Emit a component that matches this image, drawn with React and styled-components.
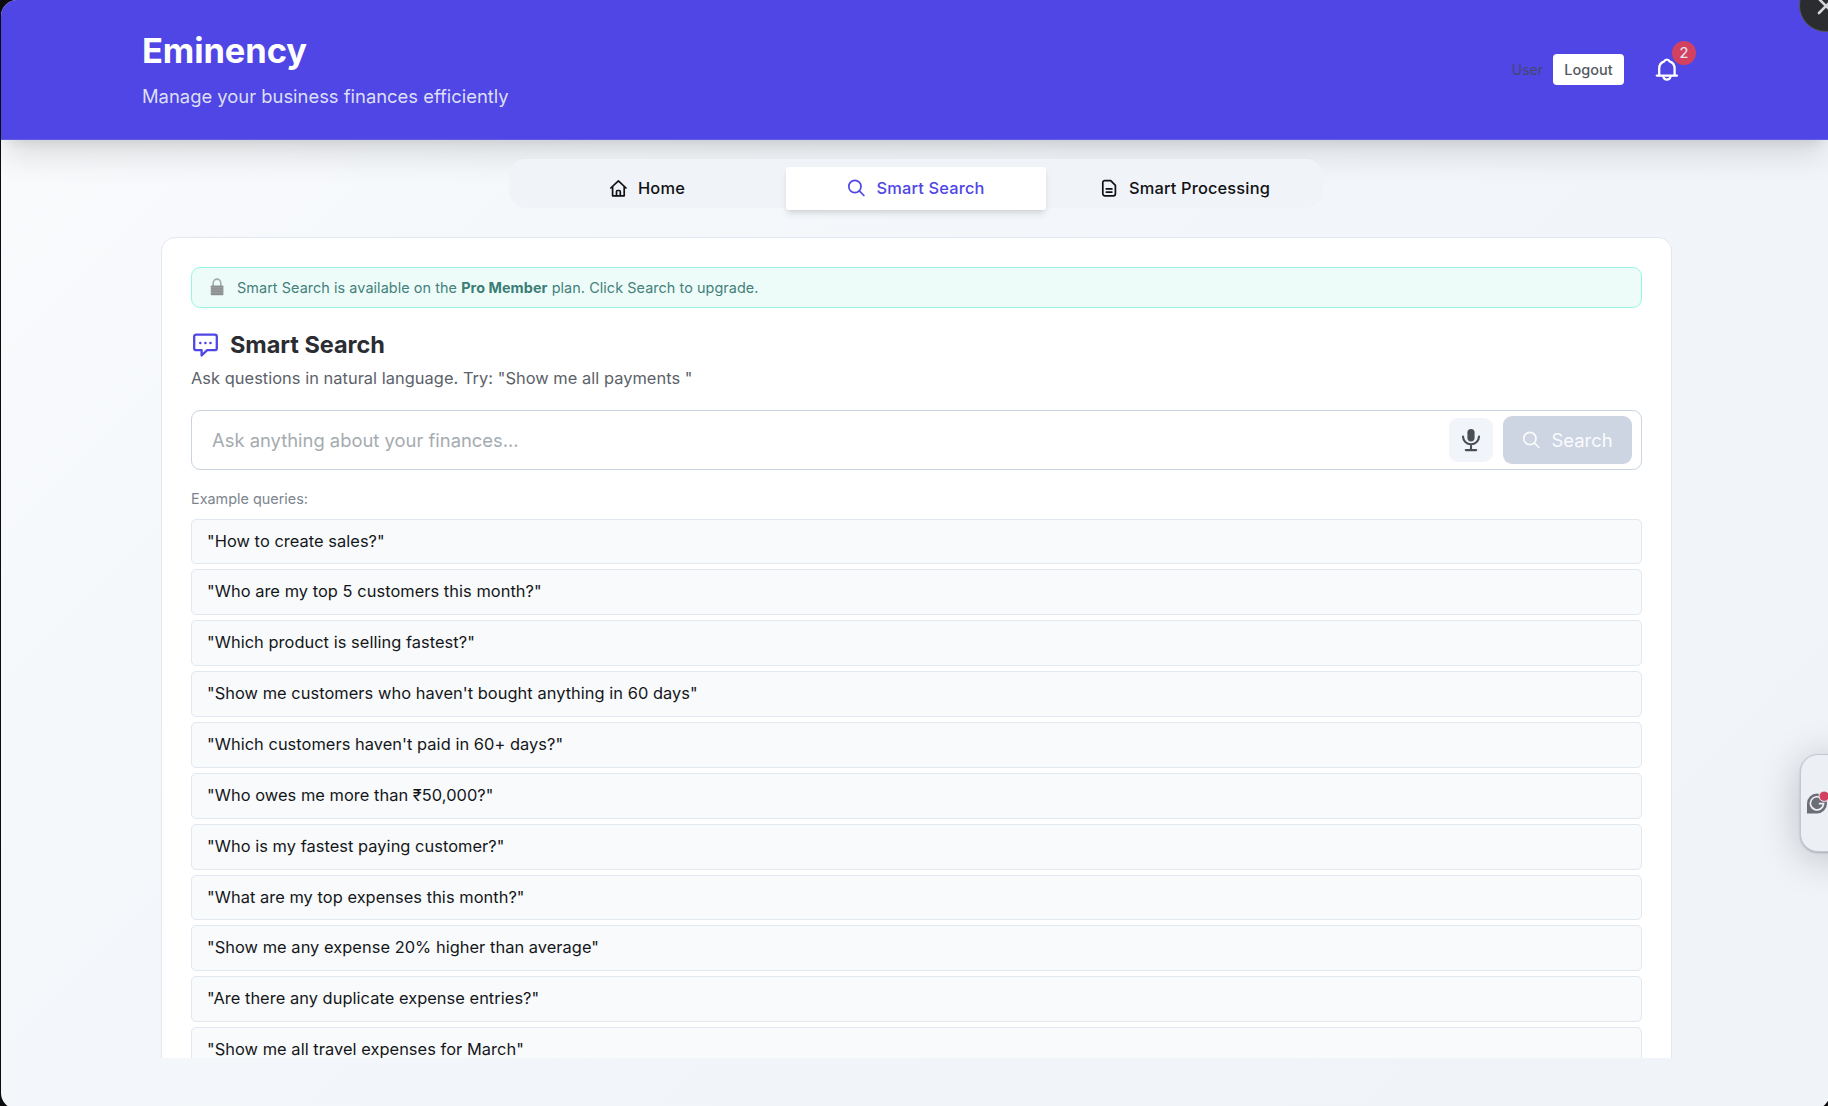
import React, { useState } from "react";
import styled, { createGlobalStyle, css } from "styled-components";

const GlobalStyle = createGlobalStyle`
  * {
    box-sizing: border-box;
  }

  body {
    margin: 0;
    background: #0c0c0e;
    font-family: Inter, "Liberation Sans", sans-serif;
  }

  button, input {
    font-family: inherit;
  }
`;

const Screen = styled.div`
  position: relative;
  width: 1828px;
  height: 1106px;
  padding-left: 1px;
  overflow: hidden;
`;

const Page = styled.div`
  display: flex;
  flex-direction: column;
  width: 1829px;
  height: 1109px;
  border-radius: 16px;
  overflow: hidden;
  background: linear-gradient(135deg, #fafafc 0%, #f4f8fb 30%, #f0f3f8 85%);
`;

const Header = styled.header`
  display: flex;
  flex-shrink: 0;
  align-items: center;
  justify-content: space-between;
  height: 140px;
  padding: 0 143px 0 141px;
  background: #4f46e5;
  border-bottom: 1px solid #6259e8;
  box-shadow: 0 22px 29px -6px rgba(0, 0, 0, 0.11),
    0 9px 12px -7px rgba(0, 0, 0, 0.1);
`;

const Brand = styled.div`
  display: flex;
  flex-direction: column;
  gap: 10px;
`;

const Title = styled.h1`
  margin: 0;
  font-size: 34.5px;
  line-height: 42px;
  font-weight: 700;
  letter-spacing: -0.1px;
  color: #fff;
`;

const Subtitle = styled.p`
  margin: 0;
  font-size: 18.4px;
  line-height: 28px;
  color: #dcdff5;
`;

const Account = styled.div`
  display: flex;
  align-items: center;
`;

const UserName = styled.span`
  margin-right: 10px;
  font-size: 14px;
  line-height: 20px;
  color: #45466f;
`;

const LogoutButton = styled.button`
  width: 71px;
  height: 31px;
  padding: 0 0 1px;
  border: 0;
  border-radius: 4px;
  background: #fff;
  font-size: 14.5px;
  font-weight: 500;
  color: #54595f;
`;

const BellButton = styled.button`
  position: relative;
  display: flex;
  margin-left: 24px;
  padding: 6px;
  border: 0;
  background: none;
  color: #fff;
`;

const Badge = styled.span`
  position: absolute;
  top: -9px;
  right: -9px;
  width: 24px;
  height: 24px;
  border-radius: 50%;
  background: #d24260;
  font-size: 14.5px;
  line-height: 24px;
  font-weight: 500;
  text-align: center;
  color: #e6e0ea;
`;

const Tabs = styled.nav`
  display: grid;
  flex-shrink: 0;
  grid-template-columns: repeat(3, 260px);
  gap: 9px;
  width: 814px;
  height: 49px;
  margin: 19px 506px 29px 508px;
  padding: 8px;
  border-radius: 17px;
  background: #f0f3f8;
`;

const Tab = styled.button`
  display: flex;
  align-items: center;
  justify-content: center;
  gap: 10px;
  height: 43px;
  padding: 0 0 1px;
  border: 0;
  border-radius: 3px;
  background: none;
  font-size: 16.4px;
  font-weight: 500;
  letter-spacing: 0.17px;
  color: #111214;

  ${({ $active }) =>
    $active &&
    css`
      background: #fff;
      color: #4f46e5;
      box-shadow: 0 5px 7px -1px rgba(0, 0, 0, 0.1),
        0 2px 5px -2px rgba(0, 0, 0, 0.1);
    `}
`;

const Viewport = styled.main`
  height: 821px;
  margin: 0 158px 0 160px;
  overflow: hidden;
`;

const Card = styled.section`
  min-height: 900px;
  padding: 29px;
  border: 1px solid #e2e8f0;
  border-radius: 14px;
  background: #fff;
`;

const Notice = styled.div`
  display: flex;
  align-items: center;
  gap: 13px;
  height: 41px;
  padding: 0 18px 1px;
  border: 1px solid #99f6e4;
  border-radius: 9px;
  background: #eefcf9;
  font-size: 14.4px;
  letter-spacing: 0.07px;
  color: #43817b;

  strong {
    font-weight: 700;
    color: #3b7d77;
  }
`;

const Heading = styled.h2`
  display: flex;
  align-items: center;
  gap: 10px;
  margin: 22px 0 0;
  font-size: 23.5px;
  line-height: 30px;
  font-weight: 700;
  letter-spacing: -0.05px;
  color: #2b2d33;

  svg {
    color: #4f46e5;
  }
`;

const Hint = styled.p`
  margin: 6px 0 20px;
  font-size: 16.4px;
  line-height: 24px;
  letter-spacing: 0.04px;
  color: #5b6169;
`;

const SearchBar = styled.form`
  display: flex;
  align-items: center;
  height: 60px;
  padding: 0 9px 0 20px;
  border: 1px solid #cbd5e1;
  border-radius: 9px;
`;

const SearchInput = styled.input`
  flex: 1;
  padding: 0;
  border: 0;
  outline: none;
  background: none;
  font-size: 18.4px;

  &::placeholder {
    color: #a5abb0;
  }
`;

const MicButton = styled.button`
  display: flex;
  align-items: center;
  justify-content: center;
  width: 44px;
  height: 44px;
  padding: 0;
  border: 0;
  border-radius: 9px;
  background: #f1f5f9;
  color: #4a4f55;
`;

const SearchButton = styled.button`
  display: flex;
  align-items: center;
  justify-content: center;
  gap: 10px;
  width: 129px;
  height: 48px;
  margin-left: 10px;
  padding: 0;
  border: 0;
  border-radius: 9px;
  background: #cdd5e2;
  color: #fafbfd;
  font-size: 18.4px;
`;

const ExamplesLabel = styled.p`
  margin: 19px 0 9.6px;
  font-size: 14.4px;
  line-height: 20px;
  color: #7c858e;
`;

const Examples = styled.ul`
  display: flex;
  flex-direction: column;
  gap: 5px;
  margin: 0;
  padding: 0;
  list-style: none;
`;

const Example = styled.li`
  flex-shrink: 0;
  height: 45.85px;
  padding-left: 15px;
  border: 1px solid #e2e8f0;
  border-radius: 5px;
  background: #f8fafc;
  font-size: 16.4px;
  line-height: 43.4px;
  letter-spacing: 0.05px;
  color: #141619;
`;

const CloseButton = styled.button`
  position: absolute;
  top: -21px;
  left: 1799px;
  display: flex;
  align-items: center;
  justify-content: center;
  width: 53px;
  height: 53px;
  padding: 0;
  border: 1px solid #55565c;
  border-radius: 50%;
  background: #2b2c30;
`;

const Assistant = styled.div`
  position: absolute;
  top: 754px;
  left: 1800px;
  width: 60px;
  height: 98px;
  padding: 36px 0 0 6px;
  border: 1px solid #c3c7cf;
  border-radius: 18px;
  background: #eceff4;
  box-shadow: 0 6px 40px rgba(0, 0, 0, 0.22), 0 1px 2px rgba(0, 0, 0, 0.2);
`;

const HomeIcon = () => (
  <svg
    width="19"
    height="19"
    viewBox="0 0 19 19"
    fill="none"
    stroke="currentColor"
    strokeWidth="1.7"
    strokeLinejoin="round"
    strokeLinecap="round"
  >
    <path d="M1.8 9L9.4 1.8 17 9" />
    <path d="M3.6 8v8.8h11.6V8" />
    <path d="M7.5 16.5v-4a1 1 0 0 1 1-1h1.8a1 1 0 0 1 1 1v4" />
  </svg>
);

const SearchIcon = () => (
  <svg
    width="19"
    height="19"
    viewBox="0 0 19 19"
    fill="none"
    stroke="currentColor"
    strokeWidth="1.7"
    strokeLinecap="round"
  >
    <circle cx="7.9" cy="7.5" r="6.1" />
    <path d="M12.3 11.9l4.6 4.6" />
  </svg>
);

const FileIcon = () => (
  <svg
    width="19"
    height="19"
    viewBox="0 0 19 19"
    fill="none"
    stroke="currentColor"
    strokeWidth="1.7"
    strokeLinejoin="round"
    strokeLinecap="round"
  >
    <path d="M4.8 1.6h5.9l4.7 4.8v8.4a2 2 0 0 1-2 2H4.8a2 2 0 0 1-2-2V3.6a2 2 0 0 1 2-2z" />
    <path d="M6.3 9.9h5.6M6.3 13.1h5.6" />
  </svg>
);

const BellIcon = () => (
  <svg
    width="27"
    height="27"
    viewBox="0 0 27 27"
    fill="none"
    stroke="currentColor"
    strokeWidth="2.3"
    strokeLinejoin="round"
    strokeLinecap="round"
  >
    <path d="M5.2 19v-6.4c0-3.4 1.9-6.2 5-7.2a2.9 2.9 0 0 1 5.4 0c3.1 1 5 3.8 5 7.2V19" />
    <path d="M2.8 19.6H23" />
    <path d="M9.3 20.6a3.7 4 0 0 0 7.2 0" />
  </svg>
);

const MessageIcon = () => (
  <svg width="29" height="29" viewBox="0 0 29 29">
    <path
      d="M5.2 3.6h18.6a2 2 0 0 1 2 2v11.6a2 2 0 0 1-2 2h-7.6l-5.6 5.3v-5.3H5.2a2 2 0 0 1-2-2V5.6a2 2 0 0 1 2-2z"
      fill="none"
      stroke="currentColor"
      strokeWidth="2.3"
      strokeLinejoin="round"
    />
    <g fill="currentColor">
      <circle cx="9.3" cy="12" r="1.3" />
      <circle cx="14.4" cy="12" r="1.3" />
      <circle cx="19.5" cy="12" r="1.3" />
    </g>
  </svg>
);

const MicIcon = () => (
  <svg width="22" height="24" viewBox="0 0 22 24">
    <rect x="7.4" y="1" width="7.2" height="12.4" rx="3.6" fill="currentColor" />
    <path
      d="M3 8.6a8 7.6 0 0 0 16 0M11 16.4v5.4M5.8 22.1h10.4"
      fill="none"
      stroke="currentColor"
      strokeWidth="2.1"
      strokeLinecap="round"
    />
  </svg>
);

const LockIcon = () => (
  <svg width="14" height="18" viewBox="0 0 14 18">
    <path
      d="M3.2 8.5V4.9a3.8 3.8 0 0 1 7.6 0v3.6"
      fill="none"
      stroke="#a6aaac"
      strokeWidth="1.6"
    />
    <rect x="0.8" y="7.4" width="12.6" height="9.8" rx="0.8" fill="#8d9091" />
    <path d="M1 9.8h12M1 12.2h12M1 14.6h12" stroke="#a2a5a6" strokeWidth="0.8" />
  </svg>
);

const CloseIcon = () => (
  <svg width="18" height="18" viewBox="0 0 18 18">
    <path
      d="M2 2l14 14M16 2L2 16"
      stroke="#d6d7da"
      strokeWidth="2.6"
      strokeLinecap="round"
    />
  </svg>
);

const AssistantIcon = () => (
  <svg width="24" height="24" viewBox="0 0 24 24">
    <path d="M10 2.5a10 10 0 1 1 0 20H0v-10a10 10 0 0 1 10-10z" fill="#6b6e75" />
    <path
      d="M14.8 7.8a6.6 6.6 0 1 0 1.8 4.9h-4.8"
      fill="none"
      stroke="#eceff4"
      strokeWidth="1.7"
    />
    <circle cx="17.2" cy="5.2" r="5.2" fill="#d24260" stroke="#eceff4" />
  </svg>
);

const tabs = [
  { label: "Home", icon: HomeIcon },
  { label: "Smart Search", icon: SearchIcon },
  { label: "Smart Processing", icon: FileIcon },
];

const examples = [
  "How to create sales?",
  "Who are my top 5 customers this month?",
  "Which product is selling fastest?",
  "Show me customers who haven't bought anything in 60 days",
  "Which customers haven't paid in 60+ days?",
  "Who owes me more than ₹50,000?",
  "Who is my fastest paying customer?",
  "What are my top expenses this month?",
  "Show me any expense 20% higher than average",
  "Are there any duplicate expense entries?",
  "Show me all travel expenses for March",
];

export default function App() {
  const [activeTab, setActiveTab] = useState("Smart Search");
  const [query, setQuery] = useState("");

  return (
    <Screen>
      <GlobalStyle />
      <Page>
        <Header>
          <Brand>
            <Title>Eminency</Title>
            <Subtitle>Manage your business finances efficiently</Subtitle>
          </Brand>
          <Account>
            <UserName>User</UserName>
            <LogoutButton>Logout</LogoutButton>
            <BellButton>
              <BellIcon />
              <Badge>2</Badge>
            </BellButton>
          </Account>
        </Header>

        <Tabs>
          {tabs.map(({ label, icon: Icon }) => (
            <Tab
              key={label}
              $active={label === activeTab}
              onClick={() => setActiveTab(label)}
            >
              <Icon />
              {label}
            </Tab>
          ))}
        </Tabs>

        <Viewport>
          <Card>
            <Notice>
              <LockIcon />
              <span>
                Smart Search is available on the <strong>Pro Member</strong>{" "}
                plan. Click Search to upgrade.
              </span>
            </Notice>
            <Heading>
              <MessageIcon />
              Smart Search
            </Heading>
            <Hint>
              Ask questions in natural language. Try: "Show me all payments "
            </Hint>
            <SearchBar onSubmit={(e) => e.preventDefault()}>
              <SearchInput
                value={query}
                placeholder="Ask anything about your finances..."
                onChange={(e) => setQuery(e.target.value)}
              />
              <MicButton type="button">
                <MicIcon />
              </MicButton>
              <SearchButton type="submit">
                <SearchIcon />
                Search
              </SearchButton>
            </SearchBar>
            <ExamplesLabel>Example queries:</ExamplesLabel>
            <Examples>
              {examples.map((text) => (
                <Example key={text}>"{text}"</Example>
              ))}
            </Examples>
          </Card>
        </Viewport>
      </Page>

      <CloseButton>
        <CloseIcon />
      </CloseButton>
      <Assistant>
        <AssistantIcon />
      </Assistant>
    </Screen>
  );
}
